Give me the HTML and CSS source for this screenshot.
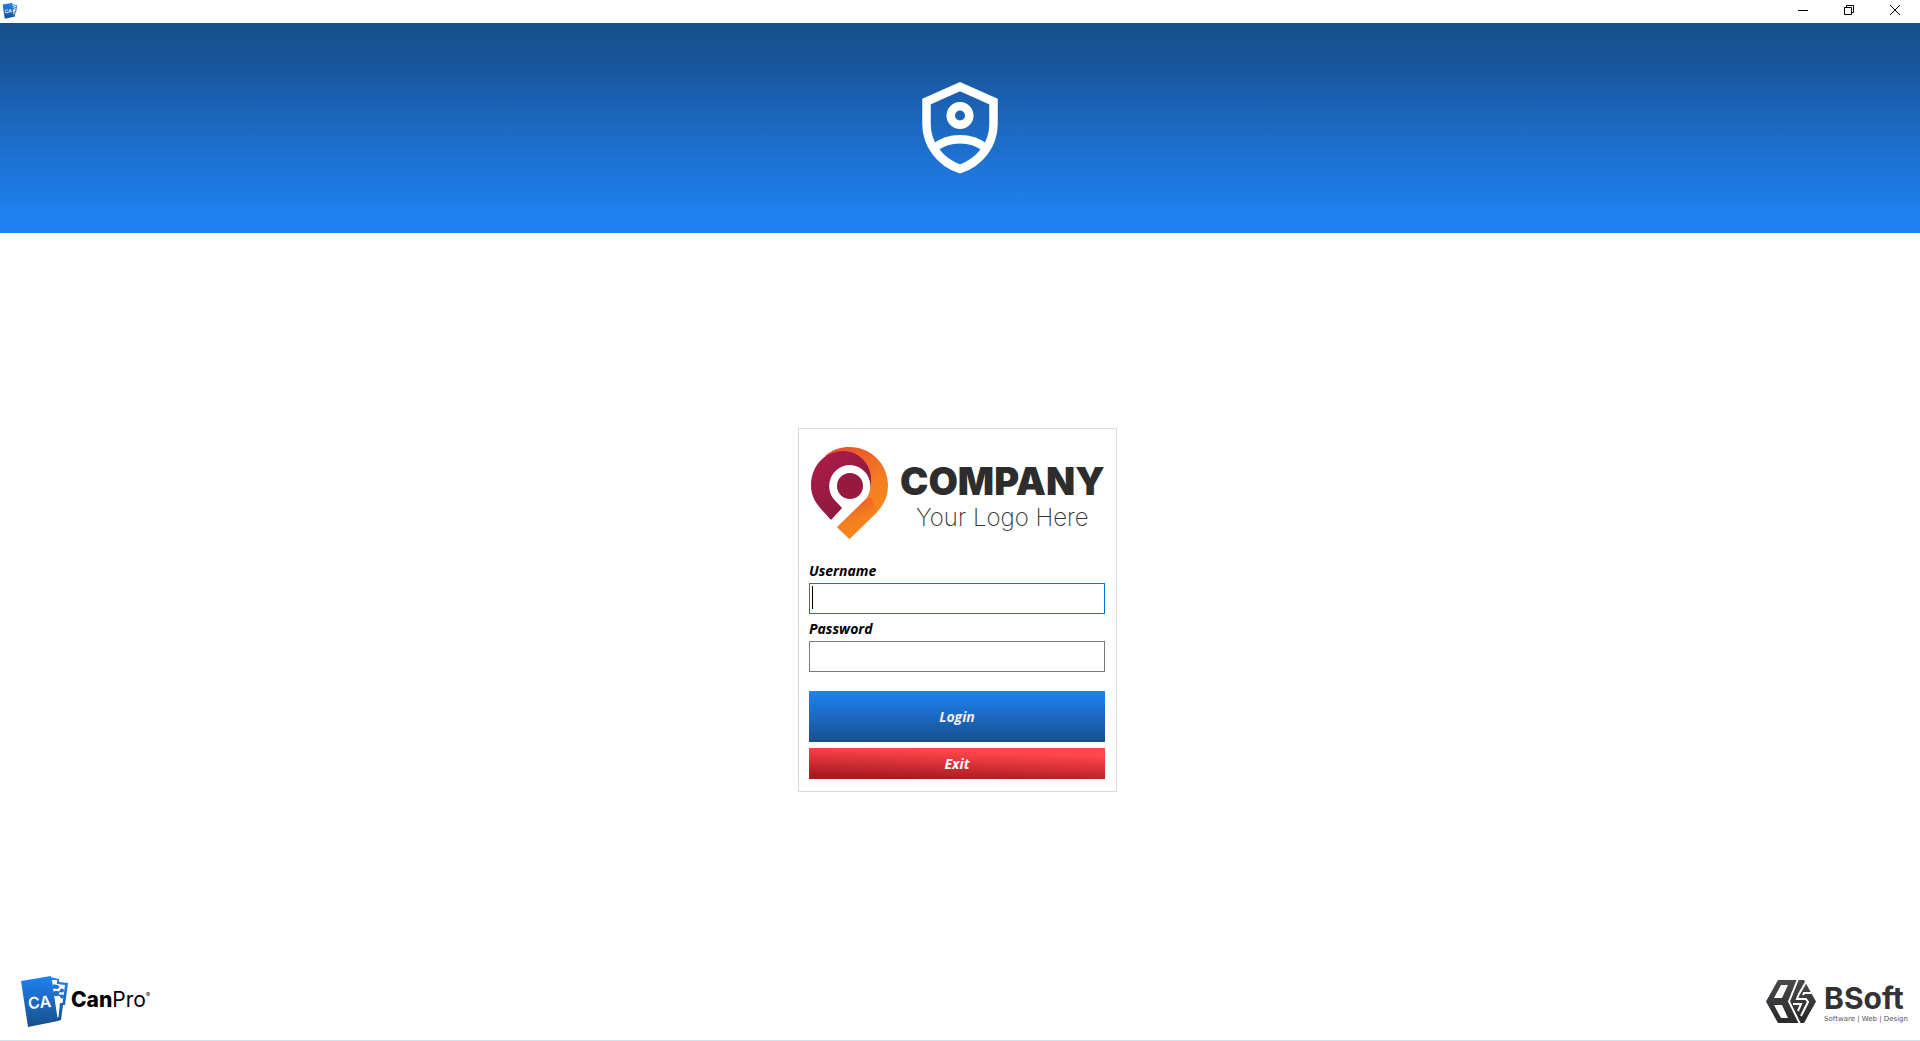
FILE: index.html
```html
<!DOCTYPE html>
<html lang="en">
<head>
<meta charset="utf-8">
<title>CanPro</title>
<link rel="stylesheet" href="styles.css">
</head>
<body>
<svg class="defs" width="0" height="0" aria-hidden="true">
  <defs>
    <linearGradient id="book" x1="0" y1="0" x2="0" y2="1"><stop offset="0" stop-color="#1f82f2"/><stop offset="1" stop-color="#174f8c"/></linearGradient>
    <linearGradient id="orange" x1="0" y1="0" x2="0.4" y2="1"><stop offset="0" stop-color="#ea4a2c"/><stop offset=".6" stop-color="#f47d20"/><stop offset="1" stop-color="#f68a1e"/></linearGradient>
    <linearGradient id="wine" x1="0" y1="0" x2=".7" y2="1"><stop offset="0" stop-color="#b01c4c"/><stop offset="1" stop-color="#87183a"/></linearGradient>
    <linearGradient id="coal" x1="0" y1="0" x2="0" y2="1"><stop offset="0" stop-color="#4a4a4c"/><stop offset="1" stop-color="#29292b"/></linearGradient>
    <symbol id="canpro-mark" viewBox="0 0 48 52">
      <path d="M29 1 38 3v3l9 1-3 22h-2l-2 15-4 1z" fill="url(#book)"/>
      <path d="M31 4h5v4l8 1-2.500 18h-2.500l-1.500 14-2 1z" fill="#fff"/>
      <path d="M31.500 9c3-1 6 0 7 2l-2 2-4.500-.5z" fill="#1d70d0"/>
      <path d="M35 17.500l6-3M35 17.500l6 3" stroke="#1d70d0" stroke-width="1.500"/>
      <circle cx="35" cy="17.500" r="2.800" fill="#1d70d0"/><circle cx="41" cy="14.500" r="2" fill="#1d70d0"/><circle cx="41" cy="20.500" r="2" fill="#1d70d0"/>
      <path d="M0 5 30 0l7 45L7 51z" fill="url(#book)"/>
      <text x="7" y="32" class="mark-text" transform="rotate(-5 18 26)">CA</text>
    </symbol>
  </defs>
</svg>

<header class="titlebar">
  <svg class="app-icon" viewBox="0 0 48 52" role="img" aria-label="CanPro"><use href="#canpro-mark"/></svg>
  <div class="window-controls">
    <button type="button" aria-label="Minimize"><svg width="10" height="10" viewBox="0 0 10 10"><path d="M0 5.500h10" stroke="#000"/></svg></button>
    <button type="button" aria-label="Restore"><svg width="10" height="10" viewBox="0 0 10 10"><path d="M.5 2.500h7v7h-7zM2.500 2V.5h7v7H8" fill="none" stroke="#000"/></svg></button>
    <button type="button" aria-label="Close"><svg width="10" height="10" viewBox="0 0 10 10"><path d="M0 0l10 10M10 0 0 10" stroke="#000"/></svg></button>
  </div>
</header>

<div class="banner">
  <svg width="76" height="92" viewBox="0 0 76 92" fill="none" stroke="#fff" stroke-width="8.500" role="img" aria-label="Account security">
    <path d="M38 4.700 71.500 19.500V42c0 20-13 38-33.500 45C17.500 80 4.500 62 4.500 42V19.500z"/>
    <circle cx="38" cy="33.500" r="9.300"/>
    <path d="M13 65.500c14-11 36-11 50 0"/>
  </svg>
</div>

<main class="content">
  <form class="login-card">
    <div class="company">
      <svg width="77" height="93" viewBox="0 0 77 93" role="img" aria-label="Company logo">
        <path d="M14 9C22 2 30 0 38.500 0 60 0 77 17 77 38.500 77 50 72 59 66 65L38.500 92 26 80 53 53z" fill="url(#orange)"/>
        <path d="M20 73 10 62C4 55 0 48 0 38.500 0 19 14 4 32 4 48 4 60 17 60 32c0 6-1 12-3 15L31 61z" fill="url(#wine)"/>
        <path d="M38.500 18a21 21 0 0 1 15 35.500L20 87 14 79 32 62 24 53.500A21 21 0 0 1 38.500 18z" fill="#fff"/>
        <path d="M26 80 53.500 53.500 60 50 66 65 38.500 92z" fill="url(#orange)"/>
        <circle cx="39" cy="39" r="13" fill="#951a3e"/>
      </svg>
      <div class="company-text">
        <span class="company-name">COMPANY</span>
        <span class="company-tag">Your Logo Here</span>
      </div>
    </div>
    <label for="username">Username</label>
    <div class="field"><input id="username" type="text" autofocus><span class="caret"></span></div>
    <label for="password">Password</label>
    <div class="field"><input id="password" type="password"></div>
    <button type="submit" class="login">Login</button>
    <button type="button" class="exit">Exit</button>
  </form>
</main>

<footer class="footer">
  <div class="canpro">
    <svg width="48" height="52" viewBox="0 0 48 52" aria-hidden="true"><use href="#canpro-mark"/></svg>
    <span class="canpro-name"><b>Can</b>Pro<sup>®</sup></span>
  </div>
  <div class="bsoft">
    <svg width="50" height="43" viewBox="0 0 50 43" aria-hidden="true">
      <path d="M12 0h26l12 21.500L38 43H12L0 21.500z" fill="url(#coal)"/>
      <path d="M15 5h7l-6 13H8zM8 25h8l6 13h-7z" fill="#fff"/>
      <path d="M32-1 23 21.500 34 44" fill="none" stroke="#fff" stroke-width="2"/>
      <path d="M40 2 33 14l-2 5h9l2 3-7 14" fill="none" stroke="#fff" stroke-width="2"/>
      <path d="M47 13h-9l-1 2M27 24h8l-3 7" fill="none" stroke="#fff" stroke-width="2"/>
    </svg>
    <div class="bsoft-text">
      <span class="bsoft-name">BSoft</span>
      <span class="bsoft-tag">Software | Web | Design</span>
    </div>
  </div>
</footer>
</body>
</html>
```
FILE: styles.css
```css
* { box-sizing: border-box; }
body {
  margin: 0;
  min-height: 100vh;
  display: flex;
  flex-direction: column;
  background: #fff;
  font-family: "Open Sans", sans-serif;
}
.defs { position: absolute; }
svg { display: block; flex: none; }
.titlebar {
  height: 23px;
  display: flex;
  justify-content: space-between;
  align-items: flex-start;
}
.app-icon { width: 16px; height: 16px; margin: 3px 0 0 2px; }
.window-controls { display: flex; padding-right: 2px; }
.window-controls button {
  width: 46px;
  height: 20px;
  padding: 0;
  border: 0;
  background: none;
  display: flex;
  align-items: center;
  justify-content: center;
}
.banner {
  height: 210px;
  display: flex;
  align-items: center;
  justify-content: center;
  background: linear-gradient(#164f8b, #19569a 20%, #1c69c2 50%, #1f80ee 90%, #1f82f2);
}
.content {
  flex: 1;
  display: flex;
  align-items: center;
  justify-content: center;
  padding: 10px 5px 0 0;
}
.login-card {
  width: 319px;
  padding: 18px 11px 12px 10px;
  border: 1px solid #d9d9d9;
  display: flex;
  flex-direction: column;
}
.company {
  display: flex;
  gap: 12px;
  padding-left: 2px;
  margin-bottom: 22px;
}
.company-text {
  display: flex;
  flex-direction: column;
  align-items: center;
  padding-top: 14px;
  font-family: Inter, sans-serif;
  white-space: nowrap;
}
.company-name { font-size: 38px; line-height: 40px; font-weight: 900; color: #2d2d2d; }
.company-tag { font-size: 24px; line-height: 34px; font-weight: 200; color: #333; }
label {
  height: 21px;
  font-size: 14px;
  line-height: 18px;
  font-weight: 700;
  font-style: italic;
  color: #000;
}
.field { position: relative; margin-bottom: 6px; }
.field input {
  display: block;
  width: 100%;
  height: 31px;
  padding: 0 3px;
  border: 1px solid #7a7a7a;
  outline: 0;
  background: #fff;
  font-size: 16px;
  caret-color: transparent;
}
.field input:focus { border-color: #0078d7; }
.caret { position: absolute; left: 3px; top: 3px; width: 1px; height: 23px; background: #000; }
.login, .exit {
  border: 0;
  padding: 0;
  color: #fff;
  font: italic 700 14px "Open Sans", sans-serif;
}
.login { height: 51px; margin: 13px 0 6px; background: linear-gradient(#1f82f2, #1c69c2 50%, #174f8b); color: #eee; }
.exit { height: 31px; background: linear-gradient(182deg, #ff464b 20%, #a81a20 90%); }
.footer {
  display: flex;
  justify-content: space-between;
  align-items: flex-start;
  height: 65px;
  padding: 0 12px 0 21px;
  border-bottom: 1px solid #cfe3ec;
}
.canpro, .bsoft { display: flex; font-family: Inter, sans-serif; }
.canpro { gap: 2px; }
.canpro-name { padding-top: 12px; font-size: 21px; line-height: 24px; color: #000; }
.canpro-name b { font-weight: 800; }
.canpro-name sup { font-size: 6px; line-height: 6px; vertical-align: 10px; }
.bsoft { gap: 8px; padding-top: 4px; }
.bsoft-text { display: flex; flex-direction: column; padding-top: 2px; }
.bsoft-name { font-size: 30px; line-height: 32px; font-weight: 700; color: #333; }
.bsoft-tag { font-size: 7px; line-height: 10px; color: #555; }
.bsoft-tag { font-family: "DejaVu Sans", sans-serif; }
.mark-text { font: 600 16px Inter, sans-serif; fill: #fff; }
```
